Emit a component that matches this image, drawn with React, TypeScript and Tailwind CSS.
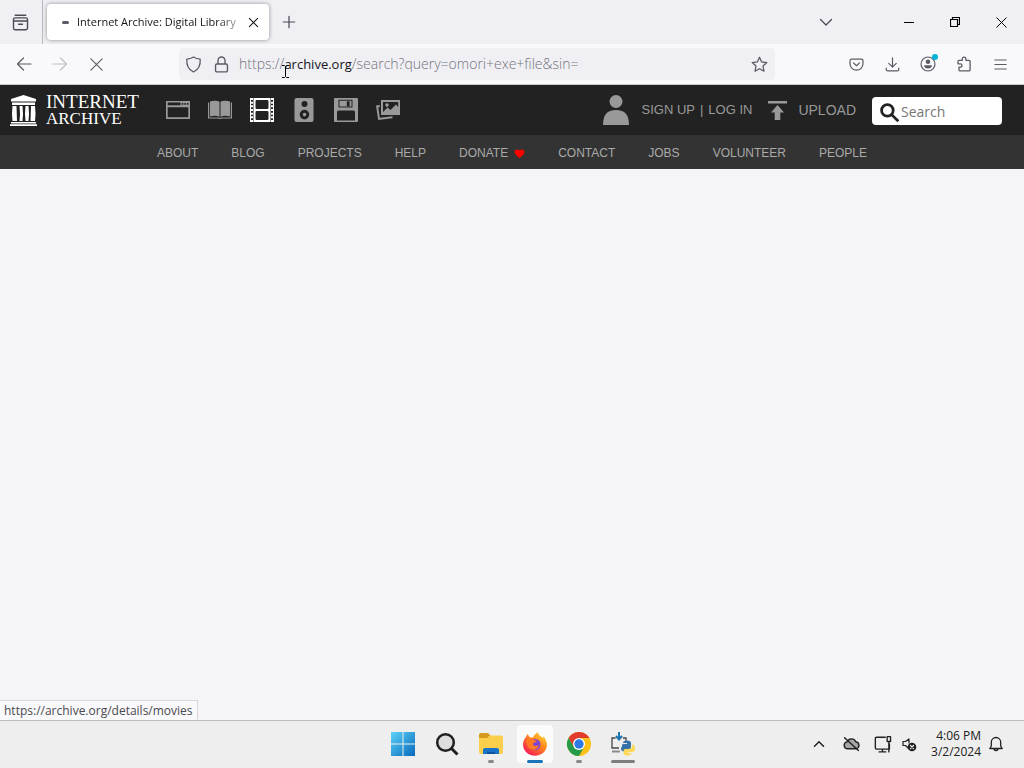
import type { ReactNode } from "react";
import clsx from "clsx";

const navLinks = ["About", "Blog", "Projects", "Help", "Donate", "Contact", "Jobs", "Volunteer", "People"];

function IconButton({ label, className, children }: { label: string; className?: string; children: ReactNode }) {
  return (
    <button type="button" aria-label={label} className={clsx("flex shrink-0 items-center justify-center", className)}>
      {children}
    </button>
  );
}

function Line({ size = 16, width = 1.2, className, children }: { size?: number; width?: number; className?: string; children: ReactNode }) {
  return (
    <svg
      width={size}
      height={size}
      viewBox="0 0 16 16"
      fill="none"
      stroke="currentColor"
      strokeWidth={width}
      strokeLinecap="round"
      strokeLinejoin="round"
      className={className}
    >
      {children}
    </svg>
  );
}

function TabStrip() {
  return (
    <div className="flex h-11 items-stretch bg-[#f0f0f4] text-[#4a4a55]">
      <IconButton label="Firefox View" className="w-10">
        <Line size={17} width={1.3}>
          <path d="M3 1.2h10M1.4 5.2a1.6 1.6 0 0 1 1.6-1.6h10a1.6 1.6 0 0 1 1.6 1.6v8a1.6 1.6 0 0 1-1.6 1.6H3a1.6 1.6 0 0 1-1.6-1.6zM1.4 6.6h13.2M6.2 9.6h3.6" />
        </Line>
      </IconButton>
      <div className="ml-0.5 w-px bg-[#b9b9c1]" />
      <div className="my-1 ml-1 flex w-[222px] items-center rounded bg-white shadow-[0_0_4px_rgba(0,0,0,0.4)]">
        <span className="ml-[15px] h-[3px] w-[7px] shrink-0 rounded-full bg-[#5b5b66]" />
        <span className="ml-2 flex-1 text-[11px] whitespace-nowrap text-[#15141a] [mask-image:linear-gradient(to_right,black_85%,rgba(0,0,0,0.3))]">
          Internet Archive: Digital Library
        </span>
        <IconButton label="Close tab" className="mr-1 size-6 text-[#15141a]">
          <Line size={11} width={1.5}>
            <path d="M2 2l12 12M14 2L2 14" />
          </Line>
        </IconButton>
      </div>
      <IconButton label="New tab" className="w-10">
        <Line size={14} width={1.4}>
          <path d="M8 1.5v13M1.5 8h13" />
        </Line>
      </IconButton>
      <div className="flex-1" />
      <IconButton label="List all tabs" className="mr-10 w-10">
        <Line size={16} width={1.3}>
          <path d="M2.5 5.5L8 11l5.5-5.5" />
        </Line>
      </IconButton>
      <IconButton label="Minimize" className="w-[46px] text-black">
        <svg width="10" height="10"><path d="M0 5.5h10" stroke="currentColor" /></svg>
      </IconButton>
      <IconButton label="Restore" className="w-[46px] text-black">
        <svg width="10" height="10" fill="none" stroke="currentColor" strokeWidth="1.2">
          <path d="M.5 2.5h7v7h-7zM2.5 2.5v-2h7v7h-2" />
        </svg>
      </IconButton>
      <IconButton label="Close" className="w-[46px] text-black">
        <svg width="11" height="11"><path d="M.5.5l10 10M10.5.5l-10 10" stroke="currentColor" /></svg>
      </IconButton>
    </div>
  );
}

function Toolbar() {
  return (
    <div className="flex h-[41px] items-center border-b border-[#cccccc] bg-[#f9f9fb] px-1.5 text-[#5b5b66]">
      <IconButton label="Back" className="size-9">
        <Line><path d="M15 8H1.5M7.5 2L1.5 8l6 6" /></Line>
      </IconButton>
      <IconButton label="Forward" className="size-9 text-[#c0c0c6]">
        <Line><path d="M1 8h13.5M8.5 2l6 6-6 6" /></Line>
      </IconButton>
      <IconButton label="Stop" className="size-9">
        <Line size={15}><path d="M2 2l12 12M14 2L2 14" /></Line>
      </IconButton>
      <div className="mr-[63px] ml-[65px] flex h-8 flex-1 items-center rounded bg-[#f0f0f4]">
        <IconButton label="Tracking protection" className="w-7">
          <Line size={17} width={1.2}>
            <path d="M8 .9c2 1.3 4 1.9 6.300 2.100.4 5.500-1.600 9.800-6.300 12.100C3.300 12.800 1.300 8.500 1.700 3 4 2.800 6 2.200 8 .9z" />
          </Line>
        </IconButton>
        <IconButton label="Site information" className="w-7">
          <Line size={17} width={1.3}>
            <path d="M3.6 7.500h8.800a1.200 1.200 0 0 1 1.200 1.200v5a1.200 1.200 0 0 1-1.200 1.200H3.600a1.200 1.200 0 0 1-1.200-1.200v-5a1.200 1.200 0 0 1 1.200-1.200zM4.700 7.500V4.300a3.300 3.300 0 0 1 6.600 0v3.200" />
          </Line>
        </IconButton>
        <div className="relative ml-1 flex-1 text-[14px] font-light whitespace-nowrap text-[#73737c]">
          https://<span className="text-[13px] font-normal text-[#15141a]">archive.org</span>/search?query=omori+exe+file&amp;sin=
          {/* text pointer */}
          <svg className="absolute top-3 left-[43px]" width="7" height="13" fill="none" stroke="#000">
            <path d="M0 .5h2.500l1 1 1-1H7M3.500 1.500v10M0 12.500h2.500l1-1 1 1H7" />
          </svg>
        </div>
        <IconButton label="Bookmark this page" className="w-8">
          <Line size={17} width={1.2}>
            <path d="M8 1.200l2 4.400 4.900.6-3.600 3.300.9 4.800L8 12l-4.200 2.300.9-4.800L1.100 6.200 6 5.600z" />
          </Line>
        </IconButton>
      </div>
      <IconButton label="Save to Pocket" className="size-9">
        <Line size={15} width={1.3}>
          <path d="M2.700 2.300h10.600a1.600 1.600 0 0 1 1.600 1.600v3.300a6.900 6.900 0 0 1-13.800 0V3.900a1.600 1.600 0 0 1 1.600-1.600zM4.800 6.300L8 9.300l3.200-3" />
        </Line>
      </IconButton>
      <IconButton label="Downloads" className="size-9">
        <Line size={15} width={1.3}>
          <path d="M8 .8v9.700M4 6.800l4 4 4-4M1.300 11.800v1.500a1.600 1.600 0 0 0 1.600 1.600h10.200a1.600 1.600 0 0 0 1.600-1.600v-1.500" />
        </Line>
      </IconButton>
      <IconButton label="Account" className="relative size-9">
        <Line>
          <circle cx="8" cy="8" r="7" />
          <circle cx="8" cy="5.800" r="2.300" fill="currentColor" stroke="none" />
          <path d="M4 9.300h8c0 2-1.600 3.300-4 3.300S4 11.300 4 9.300z" fill="currentColor" stroke="none" />
        </Line>
        <span className="absolute top-2 right-2 size-1.5 rounded-full bg-[#00b3d9]" />
      </IconButton>
      <IconButton label="Extensions" className="size-9">
        <Line width={1.3}>
          <path d="M3 4.300h3.300V3a1.800 1.800 0 0 1 3.600 0v1.300h3a1.200 1.200 0 0 1 1.200 1.200v8.200a1.200 1.200 0 0 1-1.200 1.200H4.200A1.200 1.200 0 0 1 3 13.700v-2.500h1.300a1.700 1.700 0 0 0 0-3.400H2V5.300a1 1 0 0 1 1-1z" />
        </Line>
      </IconButton>
      <IconButton label="Open application menu" className="size-9">
        <Line size={13} width={1.4}><path d="M1 2.500h14M1 8h14M1 13.500h14" /></Line>
      </IconButton>
    </div>
  );
}

const mediaIcons = [
  {
    label: "Web",
    shape: (
      <path fillRule="evenodd" d="M0 3h24v18H0zM1.700 4.500v2.700h12.800V4.500zM1.700 9.300v10h20.600v-10zM15.700 5h1.600v1.700h-1.600zM18.300 5h1.600v1.700h-1.600zM20.900 5h1.600v1.700h-1.600z" />
    ),
  },
  {
    label: "Texts",
    shape: (
      <path d="M2 3.500c3-1 7-1 9.500.3v15c-3-1.300-6.500-1.300-9.500-.3zM22 3.500c-3-1-7-1-9.500.3v15c3-1.300 6.500-1.300 9.500-.3zM0 4.500h1.200v15h9.300c.8.600 2.200.6 3 0h9.300v-15H24v16H14c-1 .8-3 .8-4 0H0z" />
    ),
  },
  {
    label: "Video",
    shape: (
      <>
        <path
          fillRule="evenodd"
          d="M3.500 0h17v24h-17zM6.800 2Q5.500 2 5.500 3.300v6.400Q5.500 11 6.800 11h10.400q1.300 0 1.300-1.300V3.300Q18.500 2 17.200 2zM6.800 13q-1.300 0-1.300 1.300v6.400q0 1.300 1.300 1.300h10.400q1.300 0 1.300-1.300v-6.400q0-1.300-1.300-1.300z"
        />
        <path d="M1.500 0v24M22.500 0v24" stroke="currentColor" strokeWidth="3" strokeDasharray="2 1.667" />
        <path d="M.5 0v24M23.500 0v24" stroke="currentColor" />
      </>
    ),
  },
  {
    label: "Audio",
    shape: (
      <path fillRule="evenodd" d="M4.500 0h15a2 2 0 0 1 2 2v20a2 2 0 0 1-2 2h-15a2 2 0 0 1-2-2V2a2 2 0 0 1 2-2zM12.500 3a3 3 0 1 0 0 6 3 3 0 0 0 0-6zM12.500 11.800a4.800 4.800 0 1 0 0 9.600 4.800 4.800 0 0 0 0-9.600zM12.500 14.800a1.800 1.800 0 1 1 0 3.600 1.800 1.800 0 0 1 0-3.600z" />
    ),
  },
  {
    label: "Software",
    shape: (
      <path fillRule="evenodd" d="M1 0h22q1 0 1 1v22q0 1-1 1H1q-1 0-1-1V1q0-1 1-1zM4.500 1.800v7.600h14V1.800zM5.500 2.800v5.600h12V2.800zM12.800 3.200h2.800v5h-2.800zM4.500 12.500Q3 12.500 3 14v8.500h18V14q0-1.500-1.500-1.500z" />
    ),
  },
  {
    label: "Images",
    shape: (
      <path fillRule="evenodd" d="M5 2h19v15H5zM7 4v10l4.500-4.500 3 2.500L20 6.500l2.200 2.500V4zM11 5.300a1.800 1.800 0 1 1 0 3.600 1.800 1.800 0 0 1 0-3.600zM0 7.500L3.800 7v2l-1.500.3 1.500 10.500 12.700-1.600v2L2.200 22z" />
    ),
  },
];

function ArchiveHeader() {
  return (
    <header className="flex h-[50px] items-center bg-[#222222] pr-[22px] pl-[10px] font-['Liberation_Sans',sans-serif] text-[14px] text-[#999999]">
      <a href="#home" aria-label="Internet Archive" className="flex w-[147px] items-center text-white">
        <svg width="27" height="31" viewBox="0 0 27 31" fill="currentColor">
          <path d="M13.500 0L26 4v2.500H1V4zM2 7.500h23V10H2zM1 27h25v1.500H1zM0 29.300h27V31H0z" />
          <path d="M2.500 11h4l.5 15H2.500q-1-7.500 0-15zM9.500 11h3q1 7.500 0 15h-3q1-7.500 0-15zM15.500 11h3q1 7.500 0 15h-3q-1-7.500 0-15zM21 11h4q1 7.500 0 15h-4.500z" />
        </svg>
        <span className="ml-[9px] flex flex-col font-['Liberation_Serif',serif] leading-[17px]">
          <span className="text-[19px]">INTERNET</span>
          <span className="text-[17px]">ARCHIVE</span>
        </span>
      </a>
      {mediaIcons.map((icon) => (
        <a
          key={icon.label}
          href={`#${icon.label}`}
          aria-label={icon.label}
          className={clsx("flex w-[42px] justify-center", icon.label === "Video" && "text-white")}
        >
          <svg width="24" height="24" viewBox="0 0 24 24" fill="currentColor">{icon.shape}</svg>
        </a>
      ))}
      <div className="ml-auto flex items-center">
        <svg width="26" height="30" viewBox="0 0 26 30" fill="currentColor">
          <circle cx="13" cy="6.500" r="6.500" />
          <path d="M0 30c0-10 4-15 13-15s13 5 13 15z" />
        </svg>
        <span className="ml-3 flex gap-[5px] text-[13px] whitespace-nowrap">
          <a href="#signup">SIGN UP</a>
          <span>|</span>
          <a href="#login">LOG IN</a>
        </span>
        <a href="#upload" className="ml-4 flex items-center gap-[11px]">
          <svg width="19" height="19" viewBox="0 0 19 19" fill="currentColor">
            <path d="M0 0h19v2.500H0zM9.500 4L16 11.500h-3.700V19H6.700v-7.500H3z" />
          </svg>
          UPLOAD
        </a>
        <label className="mt-0.5 ml-4 flex h-7 w-[130px] items-center rounded bg-white pl-2">
          <svg width="19" height="19" viewBox="0 0 18 18" fill="none" stroke="#222222" strokeWidth="2.600" className="mt-0.5 shrink-0">
            <circle cx="7" cy="7" r="5.500" />
            <path d="M11 11l6.300 6.300" />
          </svg>
          <input
            type="text"
            aria-label="Search the Archive"
            placeholder="Search"
            className="ml-0.5 w-full min-w-0 bg-transparent font-['Open_Sans',sans-serif] text-[14px] text-[#222222] outline-none placeholder:text-[#777777]"
          />
        </label>
      </div>
    </header>
  );
}

function ArchiveNav() {
  return (
    <nav className="flex h-[34px] items-center justify-center gap-[33px] bg-[#333333] pt-0.5 font-['Liberation_Sans',sans-serif] text-[12px] text-[#aaaaaa] uppercase">
      {navLinks.map((link) => (
        <a key={link} href={`#${link}`} className="flex items-center gap-1.5">
          {link}
          {link === "Donate" && (
            <svg width="11" height="9" viewBox="0 0 12 10" fill="#ff0000">
              <path d="M6 10C3 7.500.5 5.500.5 3.200.5 1.500 1.700.5 3.200.5 4.400.5 5.400.7 6 1.300 6.600.7 7.600.5 8.800.5c1.500 0 2.700 1 2.700 2.700C11.500 5.500 9 7.500 6 10z" />
            </svg>
          )}
        </a>
      ))}
    </nav>
  );
}

const taskbarApps = [
  {
    label: "Start",
    indicator: "",
    icon: (
      <svg width="24" height="24" viewBox="0 0 24 24">
        <defs>
          <linearGradient id="win" gradientUnits="userSpaceOnUse" x1="0" y1="0" x2="24" y2="24">
            <stop offset="0" stopColor="#5cd3f7" />
            <stop offset="1" stopColor="#0669bd" />
          </linearGradient>
        </defs>
        <path d="M0 0h11.500v11.500H0zM12.500 0H24v11.500H12.500zM0 12.500h11.500V24H0zM12.500 12.500H24V24H12.500z" fill="url(#win)" />
      </svg>
    ),
  },
  {
    label: "Search",
    indicator: "",
    icon: (
      <svg width="24" height="24" viewBox="0 0 24 24" fill="none" stroke="#202020" strokeWidth="2.500">
        <circle cx="10.500" cy="10.500" r="8.300" fill="#dedede" />
        <path d="M16.500 16.500l6 6" strokeWidth="3" />
      </svg>
    ),
  },
  {
    label: "File Explorer",
    indicator: "w-1.5 bg-[#888888]",
    icon: (
      <svg width="24" height="24" viewBox="0 0 24 24">
        <path d="M0 3q0-2 2-2h7l3 3h-2L8 8H0z" fill="#d79b1c" />
        <path d="M0 6h8l3-2.500h11q2 0 2 2V20q0 2-2 2H2q-2 0-2-2z" fill="#fbcf4b" />
        <path d="M4 22v-4q0-2 2-2h12q2 0 2 2v4z" fill="#1673c7" />
        <path d="M8 22v-2h8v2z" fill="#0c529d" />
      </svg>
    ),
  },
  {
    label: "Firefox",
    indicator: "w-4 bg-[#1873b8]",
    icon: (
      <svg width="24" height="24" viewBox="0 0 24 24">
        <defs>
          <linearGradient id="fox" x1="1" y1="0" x2="0.2" y2="1">
            <stop offset="0" stopColor="#fff04a" />
            <stop offset="0.45" stopColor="#ff8a1c" />
            <stop offset="1" stopColor="#f5135a" />
          </linearGradient>
        </defs>
        <path d="M3 5l1.500-3L7 5.500h3C11 3 13 1 15 0c0 3 3 4 5 6l.5-1.500C25 9 25 16 21 20c-5 5-13 5-18 0-4-4-4-11 0-15z" fill="url(#fox)" />
        <circle cx="12" cy="12.500" r="5.500" fill="#8045cf" />
        <path d="M3 8q4-3 8 0l3 1c-1 2-4 1-4 3s3 3 6 1c-1 5-7 6-10 3-2-2-3-5-3-8z" fill="#ff7a23" />
      </svg>
    ),
  },
  {
    label: "Chrome",
    indicator: "w-1.5 bg-[#888888]",
    icon: (
      <svg width="24" height="24" viewBox="0 0 24 24">
        <circle cx="12" cy="12" r="12" fill="#fbc116" />
        <path d="M1.600 6A12 12 0 0 1 22.400 6H12L6.800 15z" fill="#e33b2e" />
        <path d="M1.600 6A12 12 0 0 0 12 24l5.200-9H6.800z" fill="#269b4c" />
        <circle cx="12" cy="12" r="6" fill="#ffffff" />
        <circle cx="12" cy="12" r="4.700" fill="#2d79e6" />
      </svg>
    ),
  },
  {
    label: "Python",
    indicator: "w-6 bg-[#7d7d7d]",
    icon: (
      <svg width="24" height="24" viewBox="0 0 24 24">
        <path d="M4.500 6H1v10h7M12 6h3v3" fill="none" stroke="#454545" strokeWidth="1.300" />
        <path d="M1 19.500h8" stroke="#8b8b8b" strokeWidth="2" />
        <path d="M8 0v6M5 4l3 3.500L11 4" fill="none" stroke="#1f73ad" strokeWidth="2" />
        <path d="M11 15v-2q0-1 2-1h3v-1h-4q0-2.500 4-2.500t4 2.500v4q0 2-2 2h-3q-2 0-2 2.500-3 0-3-3 0-1.500 1-1.500z" fill="#3572a5" />
        <path d="M21 12.500q3 0 3 4t-3 3.500h-4v1h3.500q0 2.500-4 2.500t-4-2.500v-2q0-2 2-2h4q2.500 0 2.500-3z" fill="#ffd95a" />
      </svg>
    ),
  },
];

function Taskbar() {
  return (
    <footer className="grid h-12 grid-cols-[1fr_auto_1fr] items-center border-t border-[#bdbdbd] bg-[#eeeeee] pb-0.5 text-[#202020]">
      <div />
      <div className="flex pl-0.5">
        {taskbarApps.map((app) => (
          <div key={app.label} className="flex w-11 justify-center">
            <button
              type="button"
              aria-label={app.label}
              className={clsx("relative flex h-[38px] w-9 items-center justify-center rounded", app.label === "Firefox" && "bg-[#fbfbfb]")}
            >
              {app.icon}
              {app.indicator && (
                <span className={clsx("absolute bottom-0 left-1/2 h-[3px] -translate-x-1/2 rounded-full", app.indicator)} />
              )}
            </button>
          </div>
        ))}
      </div>
      <div className="flex items-center justify-end pr-5">
        <IconButton label="Show hidden icons" className="w-8">
          <Line size={12} width={2}><path d="M2 11l6-6 6 6" /></Line>
        </IconButton>
        <IconButton label="OneDrive" className="w-8">
          <Line size={17} width={1.3}>
            <path d="M4 13a3.300 3.300 0 0 1-.3-6.500A4.500 4.500 0 0 1 12 6.300 3.400 3.400 0 0 1 12.300 13z" fill="#a6a6a6" />
            <path d="M1.500 2.500l13 12" />
          </Line>
        </IconButton>
        <IconButton label="Network" className="w-8">
          <Line size={18} width={1.2}>
            <path d="M10 2H2.200a1 1 0 0 0-1 1v8.500a1 1 0 0 0 1 1h11.500V8M7.500 12.500V15M4.500 15h6M11.700 1.500h3v4.300h-3zM13.200 5.800V15" />
          </Line>
        </IconButton>
        <IconButton label="Volume" className="w-5">
          <Line>
            <path d="M8 3L4.500 5.500H2v4h2.500L7 12M8 3v4" />
            <circle cx="11" cy="11" r="4.300" fill="currentColor" stroke="none" />
            <path d="M9.500 9.500l3 3M12.500 9.500l-3 3" stroke="#eeeeee" />
          </Line>
        </IconButton>
        <div className="ml-3 text-right text-[12px] leading-4 whitespace-nowrap">
          <div>4:06 PM</div>
          <div>3/2/2024</div>
        </div>
        <IconButton label="Notifications" className="ml-[7px]">
          <Line width={1.3}>
            <path d="M1.800 12.500L3.300 10V6.200a4.700 4.700 0 0 1 9.400 0V10l1.500 2.500zM6 12.500a2 2 0 0 0 4 0" />
          </Line>
        </IconButton>
      </div>
    </footer>
  );
}

export default function App() {
  return (
    <div className="flex h-screen flex-col overflow-hidden bg-[#f5f5f7] font-['Open_Sans',sans-serif]">
      <TabStrip />
      <Toolbar />
      <ArchiveHeader />
      <ArchiveNav />
      <main className="relative flex-1">
        <div className="absolute bottom-0 left-0 border-t border-r border-[#d7d7db] bg-[#f9f9fb] px-1 text-[12px] leading-[19px] text-[#4a4a4f]">
          https://archive.org/details/movies
        </div>
      </main>
      <Taskbar />
    </div>
  );
}
